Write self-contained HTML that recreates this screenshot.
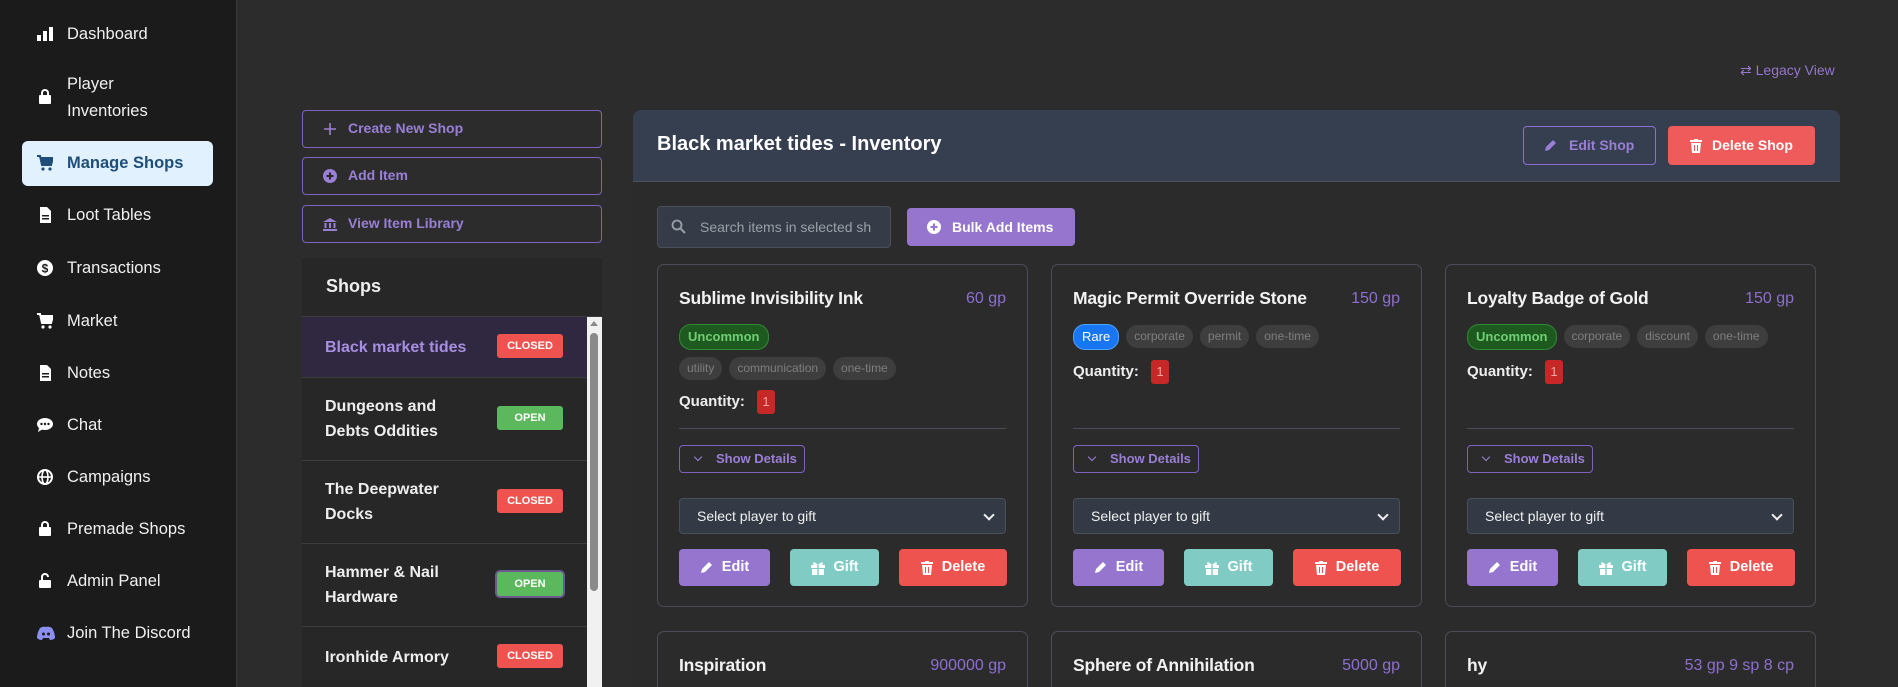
<!DOCTYPE html>
<html><head><meta charset="utf-8"><style>
*{box-sizing:border-box;margin:0;padding:0}
html,body{width:1898px;height:687px;overflow:hidden}
body{background:#2c2c2c;font-family:"Liberation Sans",sans-serif;position:relative;color:#eee}
.abs{position:absolute}
#side{left:0;top:0;width:237px;height:687px;background:#1b1b1b;border-right:1px solid #3a3a3a}
.nav{position:absolute;left:67px;font-size:16.5px;color:#f0f0f0;line-height:26px}
.ic{position:absolute;left:37px;width:16px;height:16px}
.active{left:22px;top:141px;width:191px;height:45px;background:#e1f1fd;border-radius:6px}
.lbtn{position:absolute;left:302px;width:300px;height:38px;border:1.5px solid #7e62c0;border-radius:4px;color:#9a7fd6;font-weight:bold;font-size:14px;line-height:35px;padding-left:45px}
.lbtn svg{position:absolute;left:20px;top:11px}
.row{position:absolute;left:302px;width:285px;border-bottom:1px solid #3d3d3d;background:#272727}
.row span{position:absolute;left:23px;font-weight:bold;font-size:16px;line-height:25px;color:#eee}
.bad{position:absolute;left:195px;width:66px;height:24px;border-radius:3px;color:#fff;font-size:11px;font-weight:bold;text-align:center;line-height:24px}
.cl{background:#ef5350}.op{background:#5cb85c}
.card{position:absolute;width:371px;border:1px solid #4a4d55;border-radius:7px;background:#2b2b2b;overflow:hidden}
.ct{position:absolute;left:21px;top:23px;font-weight:bold;font-size:17.5px;color:#f2f2f2;letter-spacing:-0.2px}
.pr{position:absolute;right:21px;top:25px;font-size:16px;color:#8e6fd0}
.tags{position:absolute;left:21px;display:flex;gap:7px}
.tag{height:23px;border-radius:12px;background:#3e3e3e;color:#7f7f7f;font-size:12px;line-height:23px;padding:0 8px;white-space:nowrap}
.unc{background:#1e5a20;border:1px solid #2e8b32;color:#6fcf73;font-weight:bold;height:26px;line-height:24px;font-size:13px}
.rare{background:#1976f2;color:#fff;border:1px solid #4da3ff;height:26px;line-height:24px;font-size:13px}
.tags .tag:not(.unc):not(.rare){margin-top:1px}
.q{position:absolute;left:21px;font-weight:bold;font-size:15px;color:#eee}
.qb{position:absolute;width:18px;height:24px;background:#c62828;border-radius:3px;color:#f7a0a0;font-size:13px;text-align:center;line-height:24px}
.hr{position:absolute;left:21px;right:21px;top:163px;height:1px;background:#4a4d55}
.sd{position:absolute;left:21px;top:180px;width:126px;height:28px;border:1.5px solid #7e62c0;border-radius:4px;color:#9a7fd6;font-weight:bold;font-size:13px;line-height:25px;padding-left:36px}
.sd:before{content:"";position:absolute;left:15px;top:8px;width:5px;height:5px;border-right:1.5px solid #9a7fd6;border-bottom:1.5px solid #9a7fd6;transform:rotate(45deg)}
.sel{position:absolute;left:21px;right:21px;top:233px;height:36px;background:#343a45;border:1px solid #4a4f5a;border-radius:4px;color:#f0f0f0;font-size:14px;line-height:34px;padding-left:17px}
.sel:after{content:"";position:absolute;right:12px;top:12px;width:6px;height:6px;border-right:2px solid #eee;border-bottom:2px solid #eee;transform:rotate(45deg)}
.b{position:absolute;top:284px;height:37px;border-radius:4px;color:#fff;font-weight:bold;font-size:14.5px;line-height:37px;display:flex;align-items:center;justify-content:center;gap:9px}
.be{left:21px;width:91px;background:#9575cd}
.bg{left:132px;width:89px;background:#80cbc4}
.bd{left:241px;width:108px;background:#ef5350}
</style></head><body>
<div id="side" class="abs"></div>
<div class="abs active"></div>
<svg class="ic" style="top:26px" viewBox="0 0 16 16"><rect x="0" y="9" width="4" height="6" fill="#fff"/><rect x="6" y="5" width="4" height="10" fill="#fff"/><rect x="12" y="1" width="4" height="14" fill="#fff"/></svg>
<div class="nav" style="top:21px">Dashboard</div>
<svg class="ic" style="top:89px" viewBox="0 0 16 16"><path d="M5 6V4a3 3 0 016 0v2" stroke="#fff" stroke-width="2" fill="none"/><rect x="2" y="6" width="12" height="9" rx="1" fill="#fff"/></svg>
<div class="nav" style="top:71px;line-height:27px">Player<br>Inventories</div>
<svg class="ic" style="top:155px" viewBox="0 0 16 16"><path d="M0 1h3l2 9h9l2-7H4" stroke="#1e4e79" stroke-width="2" fill="#1e4e79"/><circle cx="6" cy="14" r="1.6" fill="#1e4e79"/><circle cx="13" cy="14" r="1.6" fill="#1e4e79"/></svg>
<div class="nav" style="top:150px;color:#1e4e79;font-weight:bold">Manage Shops</div>
<svg class="ic" style="top:207px" viewBox="0 0 16 16"><path d="M3 0h7l4 4v12H3z" fill="#fff"/><rect x="5" y="8" width="7" height="1.5" fill="#1b1b1b"/><rect x="5" y="11" width="7" height="1.5" fill="#1b1b1b"/></svg>
<div class="nav" style="top:202px">Loot Tables</div>
<svg class="ic" style="top:260px" viewBox="0 0 16 16"><circle cx="8" cy="8" r="8" fill="#fff"/><text x="8" y="12.5" font-size="12" font-weight="bold" text-anchor="middle" fill="#1b1b1b" font-family="Liberation Sans">$</text></svg>
<div class="nav" style="top:255px">Transactions</div>
<svg class="ic" style="top:313px" viewBox="0 0 16 16"><path d="M0 1h3l2 9h9l2-7H4" stroke="#fff" stroke-width="2" fill="#fff"/><circle cx="6" cy="14" r="1.6" fill="#fff"/><circle cx="13" cy="14" r="1.6" fill="#fff"/></svg>
<div class="nav" style="top:308px">Market</div>
<svg class="ic" style="top:365px" viewBox="0 0 16 16"><path d="M3 0h7l4 4v12H3z" fill="#fff"/><rect x="5" y="8" width="7" height="1.5" fill="#1b1b1b"/><rect x="5" y="11" width="7" height="1.5" fill="#1b1b1b"/></svg>
<div class="nav" style="top:360px">Notes</div>
<svg class="ic" style="top:417px" viewBox="0 0 16 16"><ellipse cx="8" cy="7" rx="8" ry="6" fill="#fff"/><path d="M2 11l-1 4 5-3z" fill="#fff"/><circle cx="4.5" cy="7" r="1.2" fill="#1b1b1b"/><circle cx="8" cy="7" r="1.2" fill="#1b1b1b"/><circle cx="11.5" cy="7" r="1.2" fill="#1b1b1b"/></svg>
<div class="nav" style="top:412px">Chat</div>
<svg class="ic" style="top:469px" viewBox="0 0 16 16"><circle cx="8" cy="8" r="7" stroke="#fff" stroke-width="2" fill="none"/><ellipse cx="8" cy="8" rx="3" ry="7" stroke="#fff" stroke-width="1.6" fill="none"/><path d="M1 8h14" stroke="#fff" stroke-width="1.6"/></svg>
<div class="nav" style="top:464px">Campaigns</div>
<svg class="ic" style="top:521px" viewBox="0 0 16 16"><path d="M5 6V4a3 3 0 016 0v2" stroke="#fff" stroke-width="2" fill="none"/><rect x="2" y="6" width="12" height="9" rx="1" fill="#fff"/></svg>
<div class="nav" style="top:516px">Premade Shops</div>
<svg class="ic" style="top:573px" viewBox="0 0 16 16"><path d="M5 7V4a3 3 0 016 0" stroke="#fff" stroke-width="2" fill="none"/><rect x="2" y="7" width="12" height="8" rx="1" fill="#fff"/></svg>
<div class="nav" style="top:568px">Admin Panel</div>
<svg class="ic" style="top:625px;width:18px" viewBox="0 0 18 14"><path d="M3 2q3-2 6-1 3-1 6 1 3 5 3 10-2 2-5 2l-1-2h-6l-1 2q-3 0-5-2 0-5 3-10z" fill="#8c8ff0"/><circle cx="6.5" cy="8" r="1.5" fill="#1b1b1b"/><circle cx="11.5" cy="8" r="1.5" fill="#1b1b1b"/></svg>
<div class="nav" style="top:620px">Join The Discord</div>

<div class="abs" style="left:1740px;top:62px;color:#9575cd;font-size:14px">⇄ Legacy View</div>

<div class="lbtn" style="top:110px"><svg width="14" height="14" viewBox="0 0 14 14"><path d="M7 1v12M1 7h12" stroke="#9a7fd6" stroke-width="1.6"/></svg>Create New Shop</div>
<div class="lbtn" style="top:157px"><svg width="14" height="14" viewBox="0 0 14 14"><circle cx="7" cy="7" r="7" fill="#9a7fd6"/><path d="M7 3.5v7M3.5 7h7" stroke="#272727" stroke-width="2"/></svg>Add Item</div>
<div class="lbtn" style="top:205px"><svg width="14" height="14" viewBox="0 0 14 14"><path d="M0 5L7 1l7 4z" fill="#9a7fd6"/><rect x="1.5" y="6" width="2" height="5" fill="#9a7fd6"/><rect x="6" y="6" width="2" height="5" fill="#9a7fd6"/><rect x="10.5" y="6" width="2" height="5" fill="#9a7fd6"/><rect x="0" y="12" width="14" height="2" fill="#9a7fd6"/></svg>View Item Library</div>

<div class="abs" style="left:302px;top:258px;width:300px;height:429px;background:#272727"></div>
<div class="abs" style="left:326px;top:276px;font-weight:bold;font-size:18px;color:#eee">Shops</div>
<div class="abs" style="left:302px;top:316px;width:300px;height:1px;background:#3d3d3d"></div>
<div class="row" style="top:317px;height:61px;background:#2f2840"><span style="top:18px;color:#a78ee0">Black market tides</span><div class="bad cl" style="top:17px">CLOSED</div></div>
<div class="row" style="top:378px;height:83px"><span style="top:16px">Dungeons and<br>Debts Oddities</span><div class="bad op" style="top:28px">OPEN</div></div>
<div class="row" style="top:461px;height:83px"><span style="top:16px">The Deepwater<br>Docks</span><div class="bad cl" style="top:28px">CLOSED</div></div>
<div class="row" style="top:544px;height:83px"><span style="top:16px">Hammer &amp; Nail<br>Hardware</span><div class="bad op" style="top:28px;box-shadow:0 0 0 2px #6a5a90">OPEN</div></div>
<div class="row" style="top:627px;height:60px;border-bottom:0"><span style="top:18px">Ironhide Armory</span><div class="bad cl" style="top:17px">CLOSED</div></div>
<div class="abs" style="left:587px;top:317px;width:15px;height:370px;background:#f1f1f1"></div>
<div class="abs" style="left:590px;top:333px;width:8px;height:258px;background:#8a8a8a;border-radius:4px"></div>
<div class="abs" style="left:590px;top:321px;width:0;height:0;border:4px solid transparent;border-bottom:5px solid #8a8a8a;border-top:0"></div>

<div class="abs" style="left:633px;top:110px;width:1207px;height:577px;background:#2b2b2b;border-radius:8px 8px 0 0"></div>
<div class="abs" style="left:633px;top:110px;width:1207px;height:72px;background:#363f50;border-radius:8px 8px 0 0;border-bottom:1px solid #4a5260"></div>
<div class="abs" style="left:657px;top:133px;font-weight:bold;font-size:20px;color:#fff">Black market tides - Inventory</div>
<div class="abs" style="left:1523px;top:126px;width:133px;height:39px;border:1.5px solid #8c6fd0;border-radius:4px;color:#9a7fd6;font-weight:bold;font-size:14px;line-height:36px;padding-left:45px"><svg class="abs" style="left:20px;top:12px" width="13" height="13" viewBox="0 0 13 13"><path d="M1 12l1-4 7-7 3 3-7 7z" fill="#9a7fd6"/></svg>Edit Shop</div>
<div class="abs" style="left:1668px;top:126px;width:147px;height:39px;background:#ef5a5a;border-radius:4px;color:#fff;font-weight:bold;font-size:14px;line-height:39px;padding-left:44px"><svg class="abs" style="left:22px;top:13px" width="12" height="14" viewBox="0 0 12 14"><rect x="0" y="1" width="12" height="2" fill="#fff"/><rect x="4" y="0" width="4" height="2" fill="#fff"/><path d="M1 4h10l-1 10H2z" fill="#fff"/><path d="M4.5 6v6M7.5 6v6" stroke="#ef5a5a" stroke-width="1"/></svg>Delete Shop</div>

<div class="abs" style="left:657px;top:206px;width:234px;height:42px;background:#353b47;border:1px solid #4a4f5a;border-radius:4px;color:#9aa0a8;font-size:14px;line-height:40px;padding-left:42px;overflow:hidden;white-space:nowrap"><svg class="abs" style="left:13px;top:12px" width="15" height="15" viewBox="0 0 15 15"><circle cx="6" cy="6" r="4.5" stroke="#9aa0a8" stroke-width="1.8" fill="none"/><path d="M9.5 9.5l4.5 4.5" stroke="#9aa0a8" stroke-width="2"/></svg>Search items in selected sh</div>
<div class="abs" style="left:907px;top:208px;width:168px;height:38px;background:#9575cd;border-radius:4px;color:#fff;font-weight:bold;font-size:14px;line-height:38px;padding-left:45px"><svg class="abs" style="left:20px;top:12px" width="14" height="14" viewBox="0 0 14 14"><circle cx="7" cy="7" r="7" fill="#fff"/><path d="M7 3.5v7M3.5 7h7" stroke="#9575cd" stroke-width="2"/></svg>Bulk Add Items</div>

<svg width="0" height="0" style="position:absolute"><defs>
<symbol id="pen" viewBox="0 0 13 13"><path d="M1 12l1-4 7-7 3 3-7 7z" fill="#fff"/></symbol>
<symbol id="gift" viewBox="0 0 14 14"><rect x="0" y="4" width="14" height="3" fill="#fff"/><rect x="1" y="8" width="12" height="6" fill="#fff"/><path d="M7 4q-5-5-5-1 0 1 5 1 5 0 5-1 0-4-5 1" fill="#fff"/><rect x="6.3" y="4" width="1.4" height="10" fill="#80cbc4"/></symbol>
<symbol id="trash" viewBox="0 0 12 14"><rect x="0" y="1" width="12" height="2" fill="#fff"/><rect x="4" y="0" width="4" height="2" fill="#fff"/><path d="M1 4h10l-1 10H2z" fill="#fff"/><path d="M4.5 6v6M7.5 6v6" stroke="#ef5350" stroke-width="1"/></symbol>
</defs></svg>

<div class="card" style="left:657px;top:264px;height:343px">
<div class="ct">Sublime Invisibility Ink</div><div class="pr">60 gp</div>
<div class="tags" style="top:59px"><div class="tag unc">Uncommon</div></div>
<div class="tags" style="top:92px"><div class="tag" style="margin:0">utility</div><div class="tag" style="margin:0">communication</div><div class="tag" style="margin:0">one-time</div></div>
<div class="q" style="top:128px">Quantity:</div><div class="qb" style="left:99px;top:125px">1</div>
<div class="hr"></div><div class="sd">Show Details</div><div class="sel">Select player to gift</div>
<div class="b be"><svg width="13" height="13"><use href="#pen"/></svg>Edit</div><div class="b bg"><svg width="14" height="14"><use href="#gift"/></svg>Gift</div><div class="b bd"><svg width="12" height="14"><use href="#trash"/></svg>Delete</div>
</div>
<div class="card" style="left:1051px;top:264px;height:343px">
<div class="ct">Magic Permit Override Stone</div><div class="pr">150 gp</div>
<div class="tags" style="top:59px"><div class="tag rare">Rare</div><div class="tag">corporate</div><div class="tag">permit</div><div class="tag">one-time</div></div>
<div class="q" style="top:98px">Quantity:</div><div class="qb" style="left:99px;top:95px">1</div>
<div class="hr"></div><div class="sd">Show Details</div><div class="sel">Select player to gift</div>
<div class="b be"><svg width="13" height="13"><use href="#pen"/></svg>Edit</div><div class="b bg"><svg width="14" height="14"><use href="#gift"/></svg>Gift</div><div class="b bd"><svg width="12" height="14"><use href="#trash"/></svg>Delete</div>
</div>
<div class="card" style="left:1445px;top:264px;height:343px">
<div class="ct">Loyalty Badge of Gold</div><div class="pr">150 gp</div>
<div class="tags" style="top:59px"><div class="tag unc">Uncommon</div><div class="tag">corporate</div><div class="tag">discount</div><div class="tag">one-time</div></div>
<div class="q" style="top:98px">Quantity:</div><div class="qb" style="left:99px;top:95px">1</div>
<div class="hr"></div><div class="sd">Show Details</div><div class="sel">Select player to gift</div>
<div class="b be"><svg width="13" height="13"><use href="#pen"/></svg>Edit</div><div class="b bg"><svg width="14" height="14"><use href="#gift"/></svg>Gift</div><div class="b bd"><svg width="12" height="14"><use href="#trash"/></svg>Delete</div>
</div>
<div class="card" style="left:657px;top:631px;height:56px;border-bottom:0;border-radius:7px 7px 0 0"><div class="ct">Inspiration</div><div class="pr">900000 gp</div></div>
<div class="card" style="left:1051px;top:631px;height:56px;border-bottom:0;border-radius:7px 7px 0 0"><div class="ct">Sphere of Annihilation</div><div class="pr">5000 gp</div></div>
<div class="card" style="left:1445px;top:631px;height:56px;border-bottom:0;border-radius:7px 7px 0 0"><div class="ct">hy</div><div class="pr">53 gp 9 sp 8 cp</div></div>
</body></html>
